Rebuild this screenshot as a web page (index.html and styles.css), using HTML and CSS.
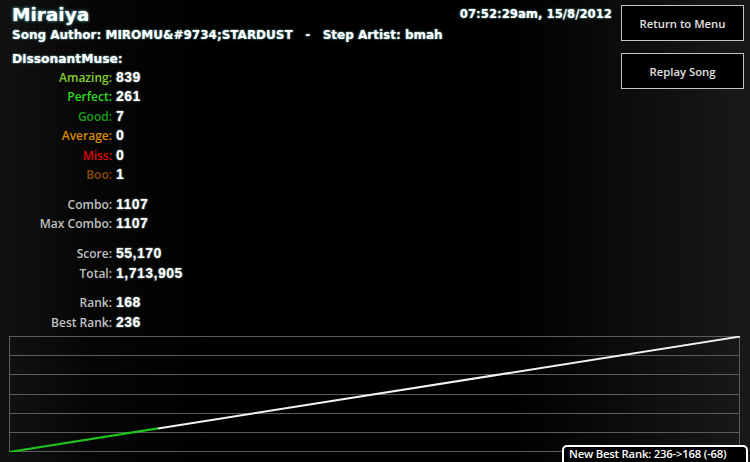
FILE: index.html
```html
<!DOCTYPE html>
<html lang="en">
<head>
  <meta charset="UTF-8">
  <title>Results - Miraiya</title>
  <link rel="stylesheet" href="styles.css">
</head>
<body>
  <div class="screen">
    <div class="top">
      <div class="left">
        <h1 class="song-title">Miraiya</h1>
        <div class="credits">Song Author: MIROMU&amp;#9734;STARDUST   -   Step Artist: bmah</div>
        <div class="player">DissonantMuse:</div>

        <div class="stats">
          <div class="group">
            <div class="row"><span class="label amazing">Amazing:</span><span class="value">839</span></div>
            <div class="row"><span class="label perfect">Perfect:</span><span class="value">261</span></div>
            <div class="row"><span class="label good">Good:</span><span class="value">7</span></div>
            <div class="row"><span class="label average">Average:</span><span class="value">0</span></div>
            <div class="row"><span class="label miss">Miss:</span><span class="value">0</span></div>
            <div class="row"><span class="label boo">Boo:</span><span class="value">1</span></div>
          </div>
          <div class="group">
            <div class="row"><span class="label">Combo:</span><span class="value">1107</span></div>
            <div class="row"><span class="label">Max Combo:</span><span class="value">1107</span></div>
          </div>
          <div class="group">
            <div class="row"><span class="label">Score:</span><span class="value">55,170</span></div>
            <div class="row"><span class="label">Total:</span><span class="value">1,713,905</span></div>
          </div>
          <div class="group">
            <div class="row"><span class="label">Rank:</span><span class="value">168</span></div>
            <div class="row"><span class="label">Best Rank:</span><span class="value">236</span></div>
          </div>
        </div>
      </div>

      <div class="clock">07:52:29am, 15/8/2012</div>

      <div class="actions">
        <button class="btn">Return to Menu</button>
        <button class="btn">Replay Song</button>
      </div>
    </div>

    <div class="graph">
      <svg width="731" height="116" viewBox="0 0 731 116">
        <g stroke="#5c5c5c" stroke-width="1">
          <line x1="0" y1="0.5" x2="731" y2="0.5"/>
          <line x1="0" y1="19.5" x2="731" y2="19.5"/>
          <line x1="0" y1="38.5" x2="731" y2="38.5"/>
          <line x1="0" y1="58.5" x2="731" y2="58.5"/>
          <line x1="0" y1="77.5" x2="731" y2="77.5"/>
          <line x1="0" y1="96.5" x2="731" y2="96.5"/>
          <line x1="0" y1="115.5" x2="731" y2="115.5"/>
          <line x1="0.5" y1="0" x2="0.5" y2="116"/>
          <line x1="730.5" y1="0" x2="730.5" y2="116"/>
        </g>
        <line x1="149" y1="92.4" x2="731" y2="0.6" stroke="#f2f2f2" stroke-width="2"/>
        <line x1="0" y1="116" x2="149" y2="92.4" stroke="#1ec21e" stroke-width="2.2"/>
      </svg>
    </div>

    <div class="new-best">New Best Rank: 236-&gt;168 (-68)</div>
  </div>
</body>
</html>
```

FILE: styles.css
```css
html, body {
  margin: 0;
  height: 100%;
}
body {
  background: linear-gradient(90deg, #121212 0%, #060606 12%, #000 28%, #000 68%, #0b0b0b 82%, #191919 100%);
  color: #fff;
  font-family: 'DejaVu Sans', Verdana, sans-serif;
  overflow: hidden;
}
.screen {
  position: relative;
  height: 462px;
}
.top {
  display: flex;
  padding-right: 6px;
  height: 336px;
}
.left {
  flex: 1;
  padding-left: 12px;
}
.song-title {
  margin: 0;
  padding-top: 3px;
  font-size: 18.5px;
  line-height: 24px;
  font-weight: bold;
  text-shadow: 0 0 2px #8fe0e0, 0 0 4px rgba(90, 200, 200, 0.5);
}
.credits {
  font-size: 12px;
  font-weight: bold;
  line-height: 16px;
  white-space: pre;
  text-shadow: 0 0 2px #8fe0e0;
}
.player {
  margin-top: 8px;
  font-size: 12.3px;
  font-weight: bold;
  line-height: 16px;
  text-shadow: 0 0 2px #8fe0e0;
}
.stats {
  margin-left: -12px;
  padding-top: 1px;
}
.group + .group {
  margin-top: 10.5px;
}
.row {
  display: flex;
  align-items: baseline;
  height: 19.4px;
  line-height: 19.4px;
}
.label {
  width: 112px;
  text-align: right;
  font-family: 'Open Sans', sans-serif;
  font-weight: 600;
  font-size: 12px;
  color: #c0c0c0;
}
.value {
  margin-left: 4px;
  font-family: 'Liberation Sans', Arial, sans-serif;
  font-weight: bold;
  font-size: 14px;
  letter-spacing: 0.5px;
  color: #fff;
  text-shadow: 0 0 2px rgba(210, 255, 255, 0.7);
}
.amazing { color: #86cc2e; }
.perfect { color: #2ddc1e; }
.good { color: #1a9e1a; }
.average { color: #d98a00; }
.miss { color: #e00000; }
.boo { color: #8a4b0a; }

.clock {
  padding-top: 6px;
  font-size: 11.7px;
  font-weight: bold;
  line-height: 16px;
  text-shadow: 0 0 2px #8fe0e0;
}
.actions {
  display: flex;
  flex-direction: column;
  gap: 12px;
  margin-left: 9px;
  padding-top: 5px;
}
.btn {
  width: 123px;
  height: 36px;
  padding: 0;
  background: #000;
  border: 1px solid #c4c4c4;
  color: #e2e2e2;
  font-family: 'Open Sans', sans-serif;
  font-weight: 600;
  font-size: 11.3px;
}
.graph {
  margin-left: 9px;
  height: 116px;
}
.graph svg {
  display: block;
}
.new-best {
  position: absolute;
  left: 562px;
  top: 445px;
  width: 172px;
  height: 24px;
  padding: 0 5px;
  border: 2px solid #fff;
  border-radius: 5px;
  background: #000;
  font-family: 'Open Sans', sans-serif;
  font-weight: 600;
  font-size: 11.3px;
  letter-spacing: -0.2px;
  line-height: 14px;
  white-space: nowrap;
  color: #fff;
}
```
